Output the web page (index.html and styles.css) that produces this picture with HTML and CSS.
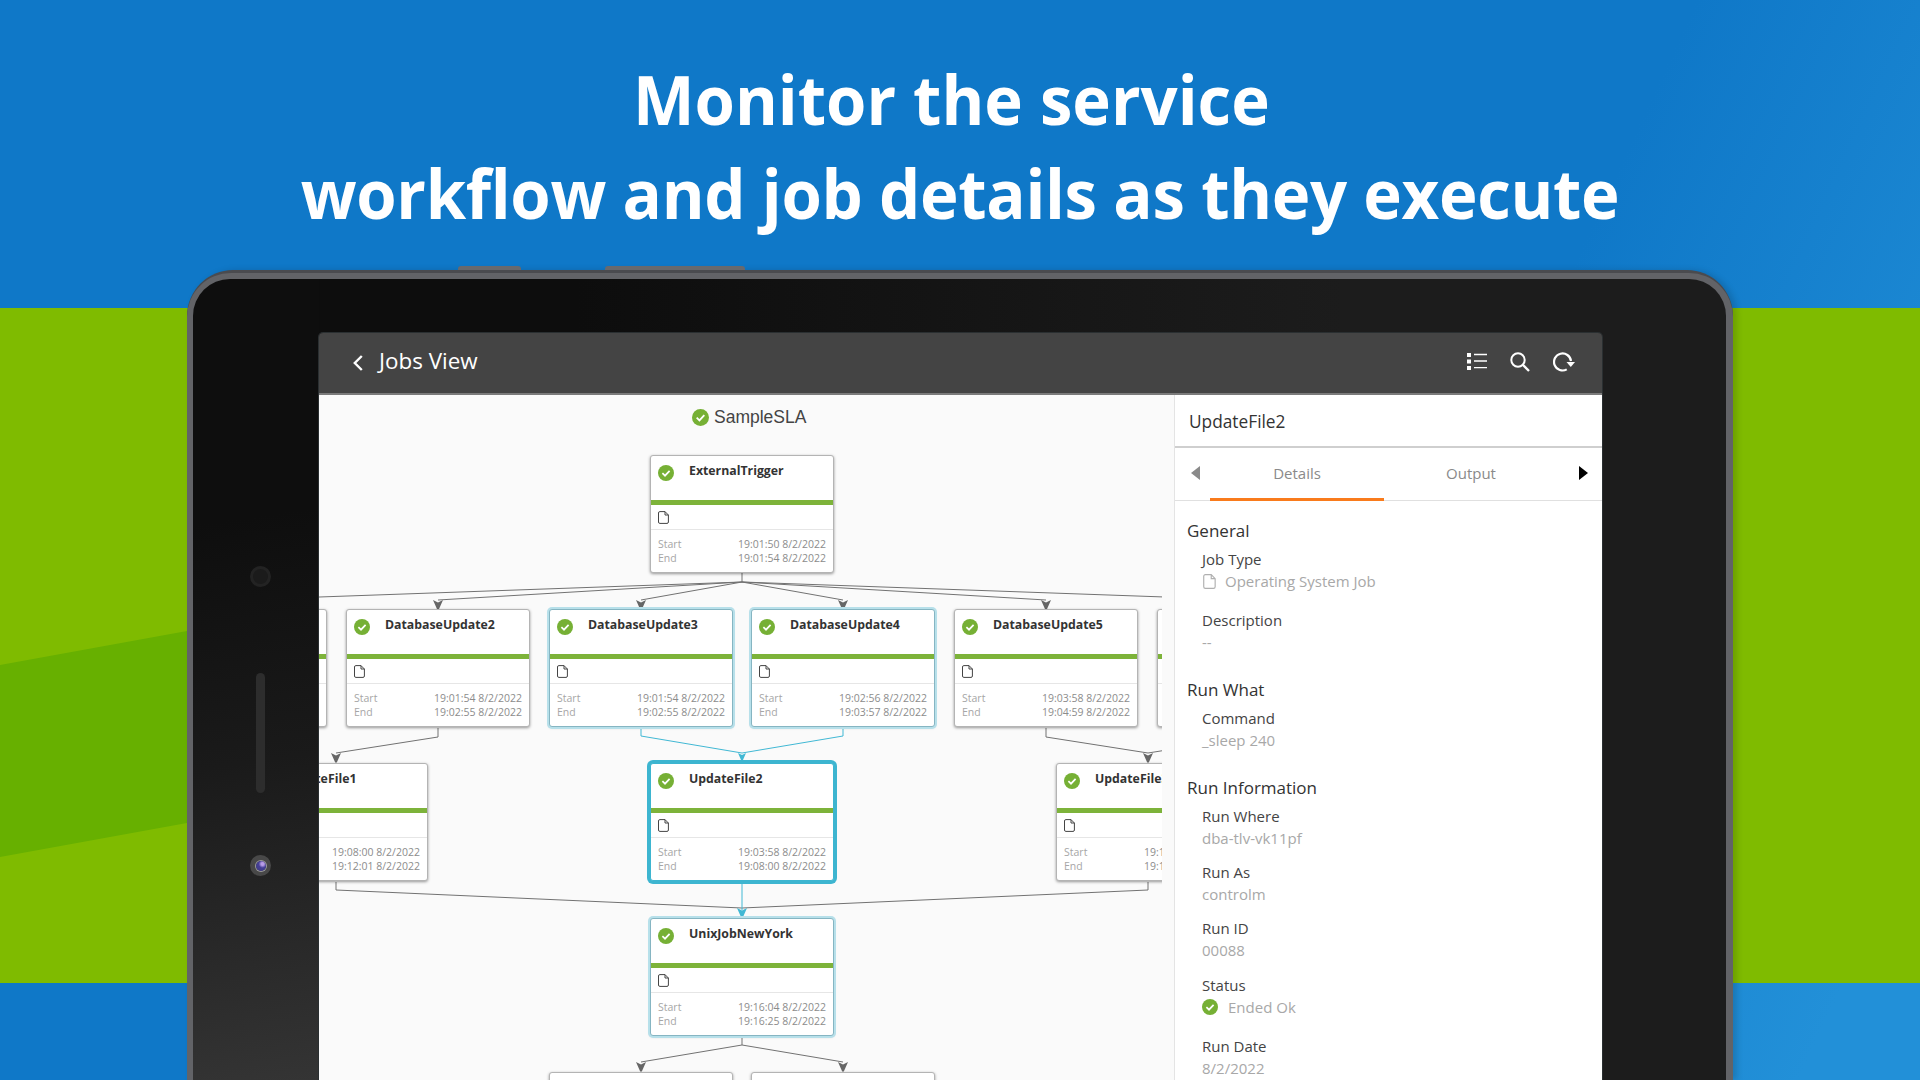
FILE: index.html
```html
<!DOCTYPE html>
<html lang="en">
<head>
<meta charset="utf-8">
<title>Jobs View</title>
<link rel="stylesheet" href="styles.css">
</head>
<body>
<svg class="defs" width="0" height="0" aria-hidden="true">
  <defs>
    <symbol id="ok" viewBox="0 0 16 16">
      <circle cx="8" cy="8" r="8" fill="#76b035"/>
      <path d="M4.400 8.200 7 10.700 11.600 5.800" fill="none" stroke="#fff" stroke-width="1.700"/>
    </symbol>
    <symbol id="file" viewBox="0 0 11 13">
      <path d="M1.900.6H7L10.400 4V11a1.400 1.400 0 0 1-1.400 1.400H1.900A1.400 1.400 0 0 1 .5 11V2A1.400 1.400 0 0 1 1.900.6ZM7 .6V4H10.400" fill="#fff" stroke="currentColor" stroke-width="1"/>
    </symbol>
    <symbol id="arr" viewBox="0 0 10 10" overflow="visible">
      <path d="M0 0 5 2.600 10 0 5.800 9.600H4.200Z" fill="currentColor"/>
    </symbol>
  </defs>
</svg>
<div class="stage">
  <div class="band"></div>
  <h1 class="headline"><span class="line line-first">Monitor the service</span><span class="line line-second">workflow and job details as they execute</span></h1>
  <div class="tablet">
    <span class="hw-btn hw-btn-a"></span>
    <span class="hw-btn hw-btn-b"></span>
    <div class="frame">
      <div class="bezel">
        <span class="speaker"></span>
        <span class="slit"></span>
        <span class="camera"><span class="lens"></span></span>
        <div class="screen">
          <header class="appbar">
            <svg class="back" width="10" height="16" viewBox="0 0 10 16"><path d="M8.800 1 1.800 8l7 7" fill="none" stroke="#fff" stroke-width="2.400"/></svg>
            <span class="appbar-title">Jobs View</span>
            <div class="appbar-tools">
              <svg width="20" height="18" viewBox="0 0 20 18"><path d="M0 0h4v4H0zM0 6.500h4v4H0zM0 13h4v4H0z" fill="#fff"/><path d="M7 1.500h13M7 8h13M7 14.700h13" stroke="#fff" stroke-width="1.300"/></svg>
              <svg width="20" height="20" viewBox="0 0 20 20"><circle cx="8" cy="8" r="6.700" fill="none" stroke="#fff" stroke-width="2"/><path d="M12.800 12.800 19 19" stroke="#fff" stroke-width="2.300"/></svg>
              <svg width="22" height="20" viewBox="0 0 22 20"><path d="M18 9A8.500 8.500 0 1 0 13.750 17.360" fill="none" stroke="#fff" stroke-width="2.200"/><path d="M13.500 10H22L17.800 15Z" fill="#fff"/></svg>
            </div>
          </header>
          <div class="workspace">
            <div class="graph">
              <div class="canvas">
                <svg class="edges" viewBox="319 395 843 685" width="843" height="685">
                  <g class="edge-grey">
                    <path d="M742 573V582L235 600M742 582 438 600M742 582 641 600M742 582 843 600M742 582 1046 600M742 582 1249 600"/>
                    <path d="M438 728V737L336 753M1046 728V737L1148 753M1249 728V737L1148 753"/>
                    <path d="M336 882V890L742 908M1148 882V890L742 908"/>
                    <path d="M742 1036V1045L641 1062M742 1045 843 1062"/>
                  </g>
                  <g class="arrows-grey">
                    <use href="#arr" x="433" y="600" width="10" height="10"/>
                    <use href="#arr" x="636" y="600" width="10" height="10"/>
                    <use href="#arr" x="838" y="600" width="10" height="10"/>
                    <use href="#arr" x="1041" y="600" width="10" height="10"/>
                    <use href="#arr" x="331" y="753" width="10" height="10"/>
                    <use href="#arr" x="1143" y="753" width="10" height="10"/>
                    <use href="#arr" x="636" y="1062" width="10" height="10"/>
                    <use href="#arr" x="838" y="1062" width="10" height="10"/>
                  </g>
                  <g class="edge-cyan">
                    <path d="M641 728V736L742 753M843 728V736L742 753M742 884V910"/>
                  </g>
                  <g class="arrows-cyan">
                    <use href="#arr" x="737" y="753" width="10" height="8"/>
                    <use href="#arr" x="737" y="908" width="10" height="10"/>
                  </g>
                </svg>

                <div class="sla"><svg width="17" height="17"><use href="#ok"/></svg><span>SampleSLA</span></div>

                <article class="node" style="left:331px;top:60px">
                  <div class="node-head"><svg width="16" height="16"><use href="#ok"/></svg><b>ExternalTrigger</b></div>
                  <div class="node-type"><svg width="11" height="13"><use href="#file"/></svg></div>
                  <div class="node-times"><span>Start</span><span>19:01:50 8/2/2022</span><span>End</span><span>19:01:54 8/2/2022</span></div>
                </article>

                <article class="node" style="left:-176px;top:214px">
                  <div class="node-head"><svg width="16" height="16"><use href="#ok"/></svg><b>DatabaseUpdate1</b></div>
                  <div class="node-type"><svg width="11" height="13"><use href="#file"/></svg></div>
                  <div class="node-times"><span>Start</span><span>19:01:54 8/2/2022</span><span>End</span><span>19:02:55 8/2/2022</span></div>
                </article>
                <article class="node" style="left:27px;top:214px">
                  <div class="node-head"><svg width="16" height="16"><use href="#ok"/></svg><b>DatabaseUpdate2</b></div>
                  <div class="node-type"><svg width="11" height="13"><use href="#file"/></svg></div>
                  <div class="node-times"><span>Start</span><span>19:01:54 8/2/2022</span><span>End</span><span>19:02:55 8/2/2022</span></div>
                </article>
                <article class="node node-path" style="left:230px;top:214px">
                  <div class="node-head"><svg width="16" height="16"><use href="#ok"/></svg><b>DatabaseUpdate3</b></div>
                  <div class="node-type"><svg width="11" height="13"><use href="#file"/></svg></div>
                  <div class="node-times"><span>Start</span><span>19:01:54 8/2/2022</span><span>End</span><span>19:02:55 8/2/2022</span></div>
                </article>
                <article class="node node-path" style="left:432px;top:214px">
                  <div class="node-head"><svg width="16" height="16"><use href="#ok"/></svg><b>DatabaseUpdate4</b></div>
                  <div class="node-type"><svg width="11" height="13"><use href="#file"/></svg></div>
                  <div class="node-times"><span>Start</span><span>19:02:56 8/2/2022</span><span>End</span><span>19:03:57 8/2/2022</span></div>
                </article>
                <article class="node" style="left:635px;top:214px">
                  <div class="node-head"><svg width="16" height="16"><use href="#ok"/></svg><b>DatabaseUpdate5</b></div>
                  <div class="node-type"><svg width="11" height="13"><use href="#file"/></svg></div>
                  <div class="node-times"><span>Start</span><span>19:03:58 8/2/2022</span><span>End</span><span>19:04:59 8/2/2022</span></div>
                </article>
                <article class="node" style="left:838px;top:214px">
                  <div class="node-head"><svg width="16" height="16"><use href="#ok"/></svg><b>DatabaseUpdate6</b></div>
                  <div class="node-type"><svg width="11" height="13"><use href="#file"/></svg></div>
                  <div class="node-times"><span>Start</span><span>19:05:00 8/2/2022</span><span>End</span><span>19:06:01 8/2/2022</span></div>
                </article>

                <article class="node" style="left:-75px;top:368px">
                  <div class="node-head"><svg width="16" height="16"><use href="#ok"/></svg><b>UpdateFile1</b></div>
                  <div class="node-type"><svg width="11" height="13"><use href="#file"/></svg></div>
                  <div class="node-times"><span>Start</span><span>19:08:00 8/2/2022</span><span>End</span><span>19:12:01 8/2/2022</span></div>
                </article>
                <article class="node node-selected" style="left:331px;top:368px">
                  <div class="node-head"><svg width="16" height="16"><use href="#ok"/></svg><b>UpdateFile2</b></div>
                  <div class="node-type"><svg width="11" height="13"><use href="#file"/></svg></div>
                  <div class="node-times"><span>Start</span><span>19:03:58 8/2/2022</span><span>End</span><span>19:08:00 8/2/2022</span></div>
                </article>
                <article class="node" style="left:737px;top:368px">
                  <div class="node-head"><svg width="16" height="16"><use href="#ok"/></svg><b>UpdateFile3</b></div>
                  <div class="node-type"><svg width="11" height="13"><use href="#file"/></svg></div>
                  <div class="node-times"><span>Start</span><span>19:12:01 8/2/2022</span><span>End</span><span>19:16:03 8/2/2022</span></div>
                </article>

                <article class="node node-path" style="left:331px;top:523px">
                  <div class="node-head"><svg width="16" height="16"><use href="#ok"/></svg><b>UnixJobNewYork</b></div>
                  <div class="node-type"><svg width="11" height="13"><use href="#file"/></svg></div>
                  <div class="node-times"><span>Start</span><span>19:16:04 8/2/2022</span><span>End</span><span>19:16:25 8/2/2022</span></div>
                </article>

                <article class="node" style="left:230px;top:677px"></article>
                <article class="node" style="left:432px;top:677px"></article>
              </div>
            </div>
            <aside class="panel">
              <div class="panel-title">UpdateFile2</div>
              <div class="tabs">
                <span class="tab-arrow tab-arrow-left"><i class="tri tri-left"></i></span>
                <span class="tab tab-active">Details</span>
                <span class="tab">Output</span>
                <span class="tab-arrow tab-arrow-right"><i class="tri tri-right"></i></span>
              </div>
              <div class="panel-body">
                <h2>General</h2>
                <div class="field"><div class="label">Job Type</div><div class="value value-icon"><svg class="value-file" width="13" height="15"><use href="#file"/></svg>Operating System Job</div></div>
                <div class="field"><div class="label">Description</div><div class="value">--</div></div>
                <h2>Run What</h2>
                <div class="field"><div class="label">Command</div><div class="value">_sleep 240</div></div>
                <h2>Run Information</h2>
                <div class="field"><div class="label">Run Where</div><div class="value">dba-tlv-vk11pf</div></div>
                <div class="field"><div class="label">Run As</div><div class="value">controlm</div></div>
                <div class="field"><div class="label">Run ID</div><div class="value">00088</div></div>
                <div class="field field-status"><div class="label">Status</div><div class="value value-icon"><svg class="value-ok" width="16" height="16"><use href="#ok"/></svg>Ended Ok</div></div>
                <div class="field"><div class="label">Run Date</div><div class="value">8/2/2022</div></div>
              </div>
            </aside>
          </div>
        </div>
      </div>
    </div>
  </div>
</div>
</body>
</html>
```

FILE: styles.css
```css
* { box-sizing: border-box; }
html, body { margin: 0; padding: 0; }
body { font-family: "Open Sans", "Noto Sans", sans-serif; overflow: hidden; }
.defs { position: absolute; }

.stage {
  position: relative;
  width: 1920px;
  height: 1080px;
  overflow: hidden;
  display: flex;
  flex-direction: column;
  background:
    linear-gradient(to bottom, transparent 308px, #7fbb00 308px, #7fbb00 983px, transparent 983px),
    linear-gradient(115deg, #0f78c8 0%, #0f78c8 70%, #2290d8 95%);
}
.band {
  position: absolute;
  left: 0;
  top: 631px;
  width: 187px;
  height: 226px;
  background: #67b000;
  clip-path: polygon(0 34px, 100% 0, 100% 192px, 0 100%);
}

.headline {
  position: relative;
  margin: 0;
  padding-top: 52px;
  color: #fff;
  font-size: 68px;
  font-weight: 700;
  line-height: 94px;
  text-align: center;
  transform: scaleX(.96);
}
.line { display: block; }
.line-first { padding-right: 18px; }
.line-second { letter-spacing: -.35px; }

.tablet {
  position: relative;
  flex: 1;
  margin: 30px 0 0 187px;
  width: 1546px;
  padding-top: 3px;
  background: #4a4b4f;
  border-radius: 46px 46px 0 0;
  display: flex;
  flex-direction: column;
  box-shadow: 4px 0 6px rgba(0, 0, 0, .15);
}
.hw-btn {
  position: absolute;
  top: -4px;
  height: 4px;
  background: #68696d;
  border-radius: 3px 3px 0 0;
}
.hw-btn-a { left: 271px; width: 63px; }
.hw-btn-b { left: 418px; width: 140px; }
.frame {
  flex: 1;
  display: flex;
  flex-direction: column;
  padding: 6px 7px 0 6px;
  background: #626367;
  border-radius: 44px 44px 0 0;
}
.bezel {
  position: relative;
  flex: 1;
  display: flex;
  flex-direction: column;
  padding: 54px 124px 0 126px;
  border-radius: 37px 37px 0 0;
  background:
    linear-gradient(172deg, #0e0e0e 30%, #1a1a1a 60%, #343434 100%) left / 126px 100% no-repeat,
    linear-gradient(90deg, #0d0d0d 0%, #0d0d0d 25%, #1c1c1c 75%);
}
.speaker {
  position: absolute;
  left: 57px;
  top: 287px;
  width: 21px;
  height: 21px;
  border-radius: 50%;
  background: #1b1b1b;
  border: 3px solid #232323;
}
.slit {
  position: absolute;
  left: 63px;
  top: 394px;
  width: 9px;
  height: 120px;
  border-radius: 5px;
  background: #2d2d2d;
}
.camera {
  position: absolute;
  left: 57px;
  top: 576px;
  width: 21px;
  height: 21px;
  border-radius: 50%;
  background: #484848;
  display: flex;
  align-items: center;
  justify-content: center;
}
.lens {
  width: 10px;
  height: 10px;
  border-radius: 50%;
  background: radial-gradient(circle at 65% 30%, #b79be6 0 15%, #453f96 40%, #3d3a80 100%);
  box-shadow: 0 0 0 1px #9a9a9a;
}

.screen {
  flex: 1;
  display: flex;
  flex-direction: column;
  min-height: 0;
  border-radius: 4px 4px 0 0;
  box-shadow: 0 0 0 1px #2a2f31;
}
.appbar {
  flex: none;
  height: 62px;
  display: flex;
  align-items: center;
  padding: 0 27px 5px 34px;
  background: #444;
  border-bottom: 2px solid #7b7b7b;
  border-radius: 4px 4px 0 0;
  color: #fff;
}
.back { flex: none; margin: 4px 16px 0 0; }
.appbar-title { font-size: 22.4px; }
.appbar-tools {
  margin: 2px 0 0 auto;
  display: flex;
  align-items: center;
  gap: 23px;
}

.workspace {
  flex: 1;
  min-height: 0;
  display: flex;
}
.graph {
  flex: none;
  width: 855px;
  background: #fafafa;
}
.canvas {
  position: relative;
  width: 843px;
  height: 100%;
  overflow: hidden;
}
.edges { position: absolute; left: 0; top: 0; }
.edge-grey path { fill: none; stroke: #727272; stroke-width: 1; }
.edge-cyan path { fill: none; stroke: #41b8d4; stroke-width: 1; }
.arrows-grey { color: #666; }
.arrows-cyan { color: #41b8d4; }

.sla {
  position: absolute;
  left: 373px;
  top: 11px;
  display: flex;
  align-items: center;
  gap: 5px;
  height: 22px;
  font-family: "Liberation Sans", Arial, sans-serif;
  font-size: 17.5px;
  color: #444;
}

.node {
  position: absolute;
  width: 184px;
  height: 118px;
  display: flex;
  flex-direction: column;
  background: #fff;
  border: 1px solid #b4b4b4;
  border-radius: 3px;
  box-shadow: 0 1px 3px rgba(0, 0, 0, .4);
}
.node-path {
  border-color: #86b5c2;
  box-shadow: 0 0 0 2px #b7e0ea, 0 1px 3px rgba(0, 0, 0, .2);
}
.node-selected {
  border-color: #3db5d0;
  box-shadow: 0 0 0 3px #3db5d0;
}
.node-head {
  flex: none;
  height: 49px;
  display: flex;
  align-items: flex-start;
  padding: 8px 0 0 7px;
  border-bottom: 5px solid #7db33a;
}
.node-head svg { flex: none; margin-top: 1px; }
.node-head b {
  margin-left: 15px;
  margin-top: -2px;
  font-size: 12.3px;
  font-weight: 700;
  line-height: 18px;
  color: #333;
  white-space: nowrap;
}
.node-type {
  flex: none;
  height: 25px;
  padding: 6px 0 0 7px;
  border-bottom: 1px solid #e6e6e6;
  color: #444;
}
.node-type svg { display: block; }
.node-times {
  display: grid;
  grid-template-columns: 1fr auto;
  padding: 7px 7px 0;
  font-size: 10.5px;
  line-height: 14px;
  color: #a6a6a6;
}
.node-times span:nth-child(even) { color: #8c8c8c; }

.panel {
  flex: 1;
  min-width: 0;
  background: #fff;
  border-left: 1px solid #e4e4e4;
}
.panel-title {
  height: 53px;
  padding: 1px 0 0 14px;
  display: flex;
  align-items: center;
  font-size: 17.3px;
  color: #333;
  border-bottom: 2px solid #cfcfcf;
}
.tabs {
  height: 53px;
  display: flex;
  border-bottom: 1px solid #e0e0e0;
  font-size: 15px;
  color: #8a8a8a;
}
.tab-arrow {
  flex: none;
  width: 35px;
  display: flex;
  align-items: center;
  justify-content: center;
  padding-bottom: 2px;
}
.tab-arrow-left { padding-left: 5px; }
.tab-arrow-right { padding-left: 16px; }
.tab {
  flex: none;
  width: 174px;
  height: 53px;
  display: flex;
  align-items: center;
  justify-content: center;
  padding-bottom: 3px;
}
.tab-active { border-bottom: 3px solid #f97b1c; padding-bottom: 0; }
.tri { display: block; width: 0; height: 0; border-top: 7px solid transparent; border-bottom: 7px solid transparent; }
.tri-left { border-right: 9px solid #8a8a8a; }
.tri-right { border-left: 9px solid #000; }

.panel-body { padding: 18px 0 0 12px; }
.panel-body h2 {
  margin: 25px 0 5px;
  font-size: 17px;
  font-weight: 400;
  line-height: 24px;
  color: #333;
}
.panel-body h2:first-child { margin-top: 0; }
.field { padding-left: 15px; }
.field + .field { margin-top: 12px; }
.field + .field-status { margin-top: 13px; }
.label, .value { font-size: 15px; line-height: 22px; }
.label { color: #444; }
.value { color: #a8a8a8; }
.value-icon { display: flex; align-items: center; padding-bottom: 5px; }
.value-file { margin: 0 9px 0 1px; color: #b0b0b0; }
.value-ok { margin-right: 10px; }
```
